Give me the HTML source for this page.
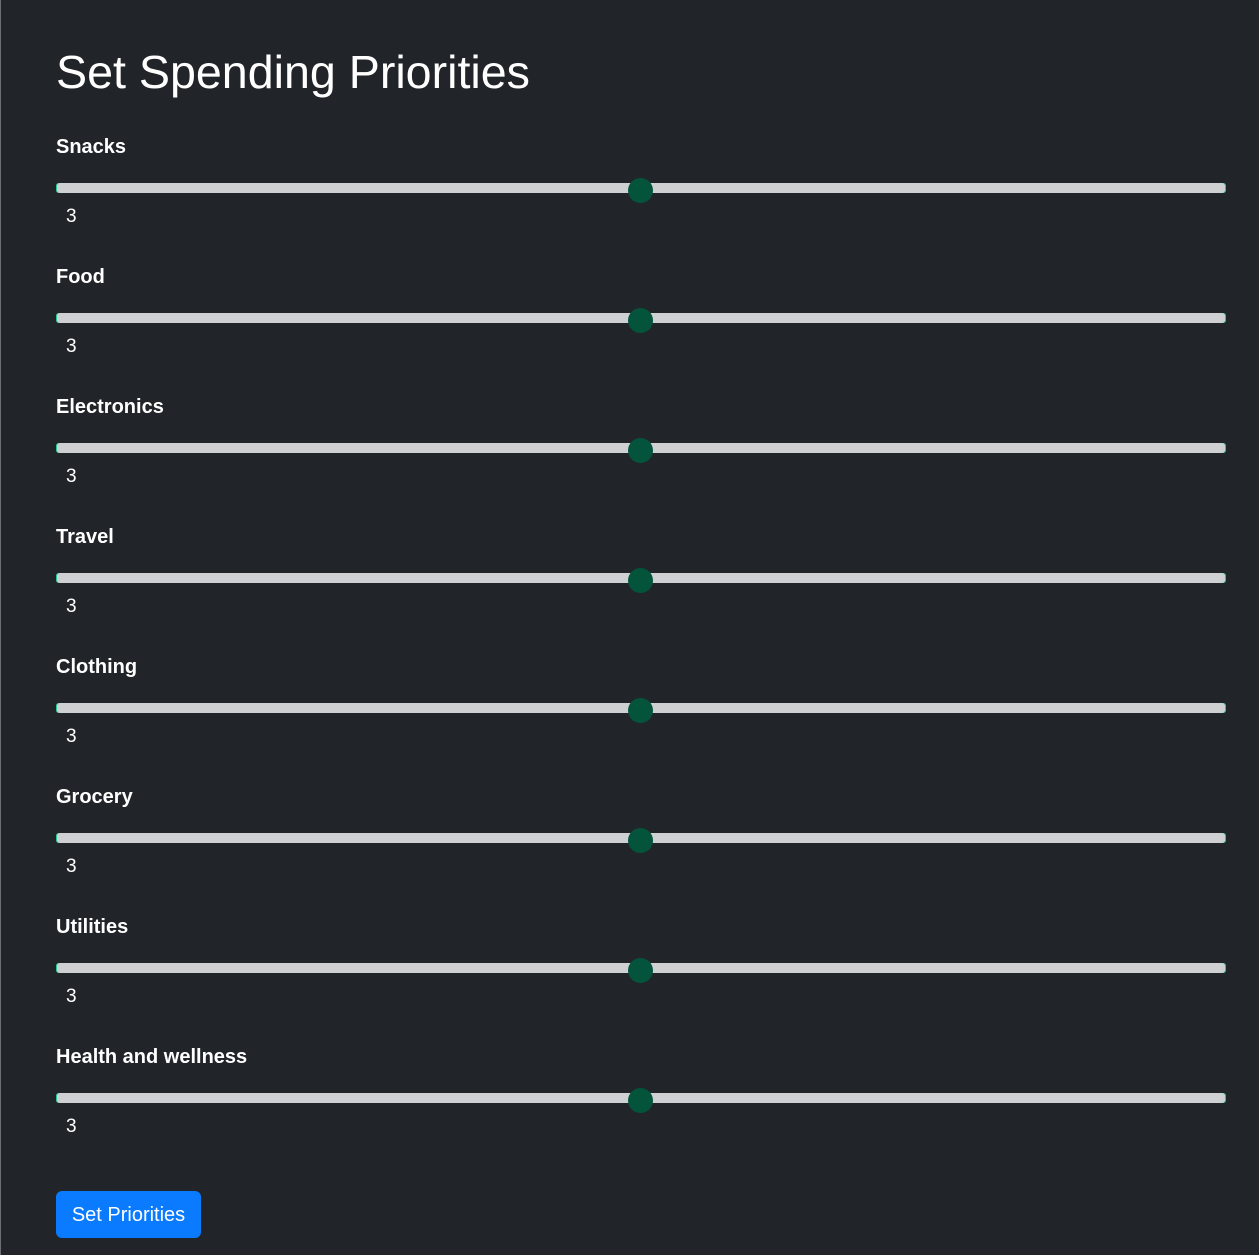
<!DOCTYPE html>
<html><head><meta charset="utf-8"><style>
html,body{margin:0;padding:0;}
body{width:1259px;height:1255px;background:#212529;position:relative;overflow:hidden;font-family:"Liberation Sans",Arial,sans-serif;color:#fff;}
.lb{position:absolute;left:0;top:0;width:1px;height:1255px;background:#6c6f73;}
h1{position:absolute;left:56px;top:44px;margin:0;font-size:46.6px;font-weight:400;line-height:56px;}
.sec{position:absolute;left:56px;width:1170px;height:130px;}
.lab{position:absolute;left:0;top:1px;font-size:20px;font-weight:700;line-height:24px;}
.tr{position:absolute;left:0;top:49px;width:1170px;height:10px;background:#cfd0d2;border-radius:3px;box-shadow:-1px 0 0 #20c997 inset,1px 0 0 #20c997 inset;}
.th{position:absolute;left:572px;top:44px;width:25px;height:25px;border-radius:50%;background:#03543b;}
.v{position:absolute;left:10px;top:71px;font-size:19px;line-height:24px;}
.btn{position:absolute;left:56px;top:1191px;width:145px;height:47px;background:#0a7bff;border-radius:6px;color:#fff;font-size:20px;line-height:49px;text-align:center;}
</style></head><body>
<div class="lb"></div>
<h1>Set Spending Priorities</h1>
<div class="sec" style="top:134px"><div class="lab">Snacks</div><div class="tr"></div><div class="th"></div><div class="v">3</div></div>
<div class="sec" style="top:264px"><div class="lab">Food</div><div class="tr"></div><div class="th"></div><div class="v">3</div></div>
<div class="sec" style="top:394px"><div class="lab">Electronics</div><div class="tr"></div><div class="th"></div><div class="v">3</div></div>
<div class="sec" style="top:524px"><div class="lab">Travel</div><div class="tr"></div><div class="th"></div><div class="v">3</div></div>
<div class="sec" style="top:654px"><div class="lab">Clothing</div><div class="tr"></div><div class="th"></div><div class="v">3</div></div>
<div class="sec" style="top:784px"><div class="lab">Grocery</div><div class="tr"></div><div class="th"></div><div class="v">3</div></div>
<div class="sec" style="top:914px"><div class="lab">Utilities</div><div class="tr"></div><div class="th"></div><div class="v">3</div></div>
<div class="sec" style="top:1044px"><div class="lab">Health and wellness</div><div class="tr"></div><div class="th"></div><div class="v">3</div></div>
<div class="btn">Set Priorities</div>
</body></html>
